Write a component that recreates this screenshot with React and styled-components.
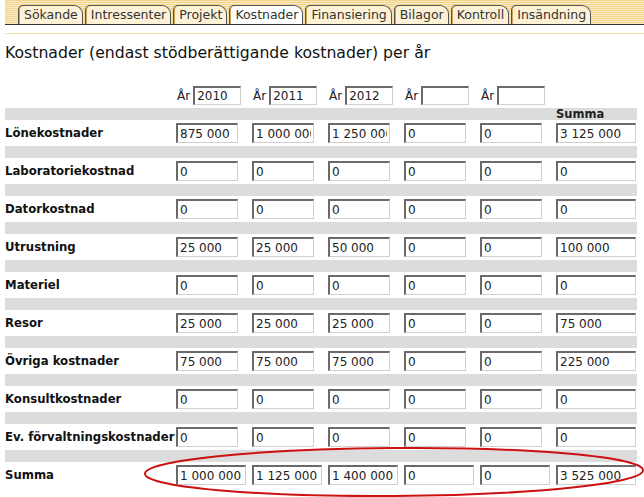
import React from 'react'
import styled, { createGlobalStyle } from 'styled-components'

const GlobalStyle = createGlobalStyle`
  body {
    margin: 0;
    background: #fff;
    font-family: "DejaVu Sans", Verdana, sans-serif;
    color: #111;
  }
`

const tabs = ['Sökande', 'Intressenter', 'Projekt', 'Kostnader', 'Finansiering', 'Bilagor', 'Kontroll', 'Insändning']
const years = ['2010', '2011', '2012', '', '']

const rows = [
  ['Lönekostnader', ['875 000', '1 000 000', '1 250 000', '0', '0', '3 125 000']],
  ['Laboratoriekostnad', ['0', '0', '0', '0', '0', '0']],
  ['Datorkostnad', ['0', '0', '0', '0', '0', '0']],
  ['Utrustning', ['25 000', '25 000', '50 000', '0', '0', '100 000']],
  ['Materiel', ['0', '0', '0', '0', '0', '0']],
  ['Resor', ['25 000', '25 000', '25 000', '0', '0', '75 000']],
  ['Övriga kostnader', ['75 000', '75 000', '75 000', '0', '0', '225 000']],
  ['Konsultkostnader', ['0', '0', '0', '0', '0', '0']],
  ['Ev. förvaltningskostnader', ['0', '0', '0', '0', '0', '0']]
]
const totals = ['1 000 000', '1 125 000', '1 400 000', '0', '0', '3 525 000']

const App = () => (
  <Page>
    <GlobalStyle />
    <TabBar>
      {tabs.map(t => (
        <Tab key={t} active={t === 'Kostnader'}>{t}</Tab>
      ))}
    </TabBar>
    <Divider />
    <Title>Kostnader (endast stödberättigande kostnader) per år</Title>

    <YearRow>
      <span />
      {years.map((y, i) => (
        <YearCell key={i}>
          År <YearInput readOnly value={y} />
        </YearCell>
      ))}
    </YearRow>

    {rows.map(([label, values], i) => (
      <React.Fragment key={label}>
        <Band>{i === 0 && <SumHead>Summa</SumHead>}</Band>
        <Row>
          <Label>{label}</Label>
          {values.map((v, j) => (
            <Cell key={j}>
              <Amount readOnly value={v} sum={j === 5} />
            </Cell>
          ))}
        </Row>
      </React.Fragment>
    ))}

    <Band />
    <Row>
      <Label>Summa</Label>
      {totals.map((v, j) => (
        <Cell key={j}>
          <Amount readOnly value={v} total sum={j === 5} />
        </Cell>
      ))}
    </Row>

    <Marker viewBox="0 0 644 497" width="644" height="497">
      <ellipse
        cx="394"
        cy="472"
        rx="249"
        ry="24"
        fill="none"
        stroke="#cc1111"
        strokeWidth="2"
        transform="rotate(-0.4 394 472)"
      />
    </Marker>
  </Page>
)

const Page = styled.div`
  position: relative;
  width: 644px;
  height: 497px;
  overflow: hidden;
`

const TabBar = styled.div`
  margin-left: 5px;
  height: 24px;
  padding-left: 13px;
  display: flex;
  align-items: flex-end;
  gap: 2px;
  border-bottom: 1px solid #333;
  background: repeating-linear-gradient(to bottom, #f2d48e 0 1px, #fcebc0 1px 2px);
`

const Tab = styled.div`
  height: 19px;
  box-sizing: border-box;
  padding: 0 4px 0 5px;
  border: 1px solid #555;
  border-bottom: none;
  border-radius: 5px 9px 0 0;
  box-shadow: inset 1px 0 0 #c9a45a;
  background: ${p => (p.active ? '#fff' : '#fdf1d6')};
  font-size: 12.5px;
  line-height: 18px;
  color: #333;
  white-space: nowrap;
`

const Divider = styled.div`
  margin: 8px 0 0 5px;
  height: 1px;
  background: #f3e3ab;
`

const Title = styled.h1`
  margin: 10px 0 0 5px;
  font-size: 15.7px;
  line-height: 18px;
  font-weight: normal;
  color: #111;
`

const grid = `
  display: grid;
  grid-template-columns: 171px repeat(5, 76px) 1fr;
  margin-left: 5px;
  width: 632px;
`

const YearRow = styled.div`
  ${grid}
  margin-top: 24px;
  height: 22px;
  align-items: start;
`

const YearCell = styled.div`
  display: flex;
  align-items: center;
  gap: 3px;
  padding-left: 1px;
  font-size: 12px;
  color: #222;
`

const field = `
  box-sizing: border-box;
  font-family: "DejaVu Sans", Verdana, sans-serif;
  font-size: 12px;
  color: #222;
  background: #fff;
  padding: 0 2px;
  border-style: solid;
  border-width: 2px 1px 1px 2px;
  border-color: #6a6a6a #cfcfcf #cfcfcf #6a6a6a;
  outline: none;
`

const YearInput = styled.input`
  ${field}
  width: 48px;
  height: 19px;
`

const Band = styled.div`
  ${grid}
  height: 12px;
  background: #dcdcdc;
`

const SumHead = styled.div`
  grid-column: 7;
  font-size: 11.5px;
  line-height: 12px;
  font-weight: bold;
  color: #222;
`

const Row = styled.div`
  ${grid}
  height: 26px;
  align-items: center;
`

const Label = styled.div`
  font-size: 11.7px;
  font-weight: bold;
  color: #111;
  white-space: nowrap;
`

const Cell = styled.div`
  display: flex;
  align-items: center;
`

const Amount = styled.input`
  ${field}
  width: ${p => (p.sum ? '80px' : p.total ? '70px' : '62px')};
  height: 20px;
`

const Marker = styled.svg`
  position: absolute;
  left: 0;
  top: 0;
  pointer-events: none;
`

export default App
